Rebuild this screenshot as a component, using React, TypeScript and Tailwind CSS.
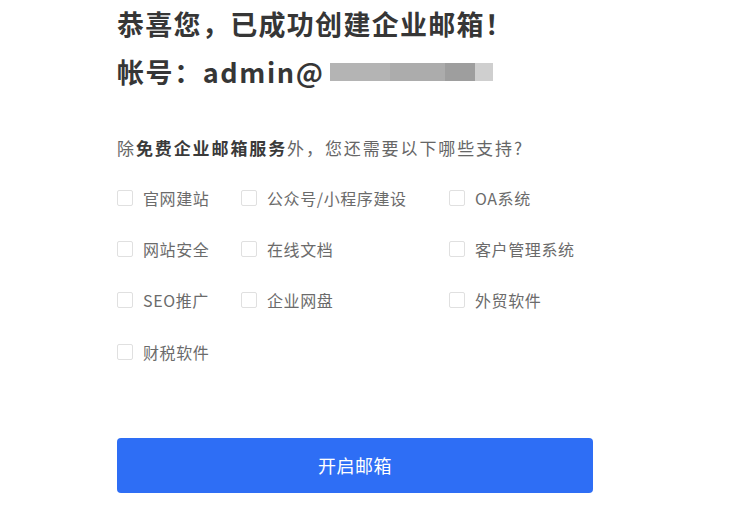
import { useState } from 'react';

const font = { fontFamily: '"Noto Sans CJK SC", "Noto Sans", sans-serif' };

const options: { label: string; col: 1 | 2 | 3 }[][] = [
  [
    { label: '官网建站', col: 1 },
    { label: '公众号/小程序建设', col: 2 },
    { label: 'OA系统', col: 3 },
  ],
  [
    { label: '网站安全', col: 1 },
    { label: '在线文档', col: 2 },
    { label: '客户管理系统', col: 3 },
  ],
  [
    { label: 'SEO推广', col: 1 },
    { label: '企业网盘', col: 2 },
    { label: '外贸软件', col: 3 },
  ],
  [{ label: '财税软件', col: 1 }],
];

function Option({ label, checked, onToggle }: { label: string; checked: boolean; onToggle: () => void }) {
  return (
    <label className="flex cursor-pointer items-center gap-[10px] text-[16px] tracking-[0.6px] text-[#6b6b6b]">
      <span
        className={
          checked
            ? 'flex h-[16px] w-[16px] items-center justify-center rounded-[2px] border border-[#2e6ef5] bg-[#2e6ef5]'
            : 'h-[16px] w-[16px] rounded-[2px] border border-[#e0e0e0] bg-white'
        }
        onClick={onToggle}
      />
      <span>{label}</span>
    </label>
  );
}

export default function App() {
  const [picked, setPicked] = useState<Record<string, boolean>>({});
  const toggle = (k: string) => setPicked((p) => ({ ...p, [k]: !p[k] }));

  return (
    <div className="min-h-[505px] w-[733px] bg-white pl-[117px]" style={font}>
      <h1 className="text-[27px] font-bold leading-[48px] tracking-[1.3px] text-[#363636]">恭喜您，已成功创建企业邮箱！</h1>
      <div className="flex items-center text-[27px] font-bold leading-[48px] text-[#363636]">
        <span className="tracking-[1.6px]">帐号：admin@</span>
        <span className="ml-[6px] flex h-[18px] items-stretch">
          <span className="w-[60px] bg-[#b4b4b4]" />
          <span className="w-[55px] bg-[#acacac]" />
          <span className="w-[30px] bg-[#9e9e9e]" />
          <span className="w-[18px] bg-[#cfcfcf]" />
        </span>
      </div>

      <p className="mt-[38px] text-[17px] leading-[28px] tracking-[1.9px] text-[#666]">
        除<b className="font-bold text-[#3a3a3a]">免费企业邮箱服务</b>外，您还需要以下哪些支持?
      </p>

      <div className="mt-[10px] grid w-[500px] grid-cols-[124px_208px_1fr] auto-rows-[51.4px] items-center">
        {options.map((row) =>
          [1, 2, 3].map((c) => {
            const item = row.find((o) => o.col === c);
            if (!item) return <div key={`${row[0].label}-${c}`} />;
            return <Option key={item.label} label={item.label} checked={!!picked[item.label]} onToggle={() => toggle(item.label)} />;
          }),
        )}
      </div>

      <button className="mt-[60px] h-[55px] w-[476px] rounded-[4px] bg-[#2e6ef5] text-[18px] tracking-[0.5px] text-white" type="button">
        开启邮箱
      </button>
    </div>
  );
}
